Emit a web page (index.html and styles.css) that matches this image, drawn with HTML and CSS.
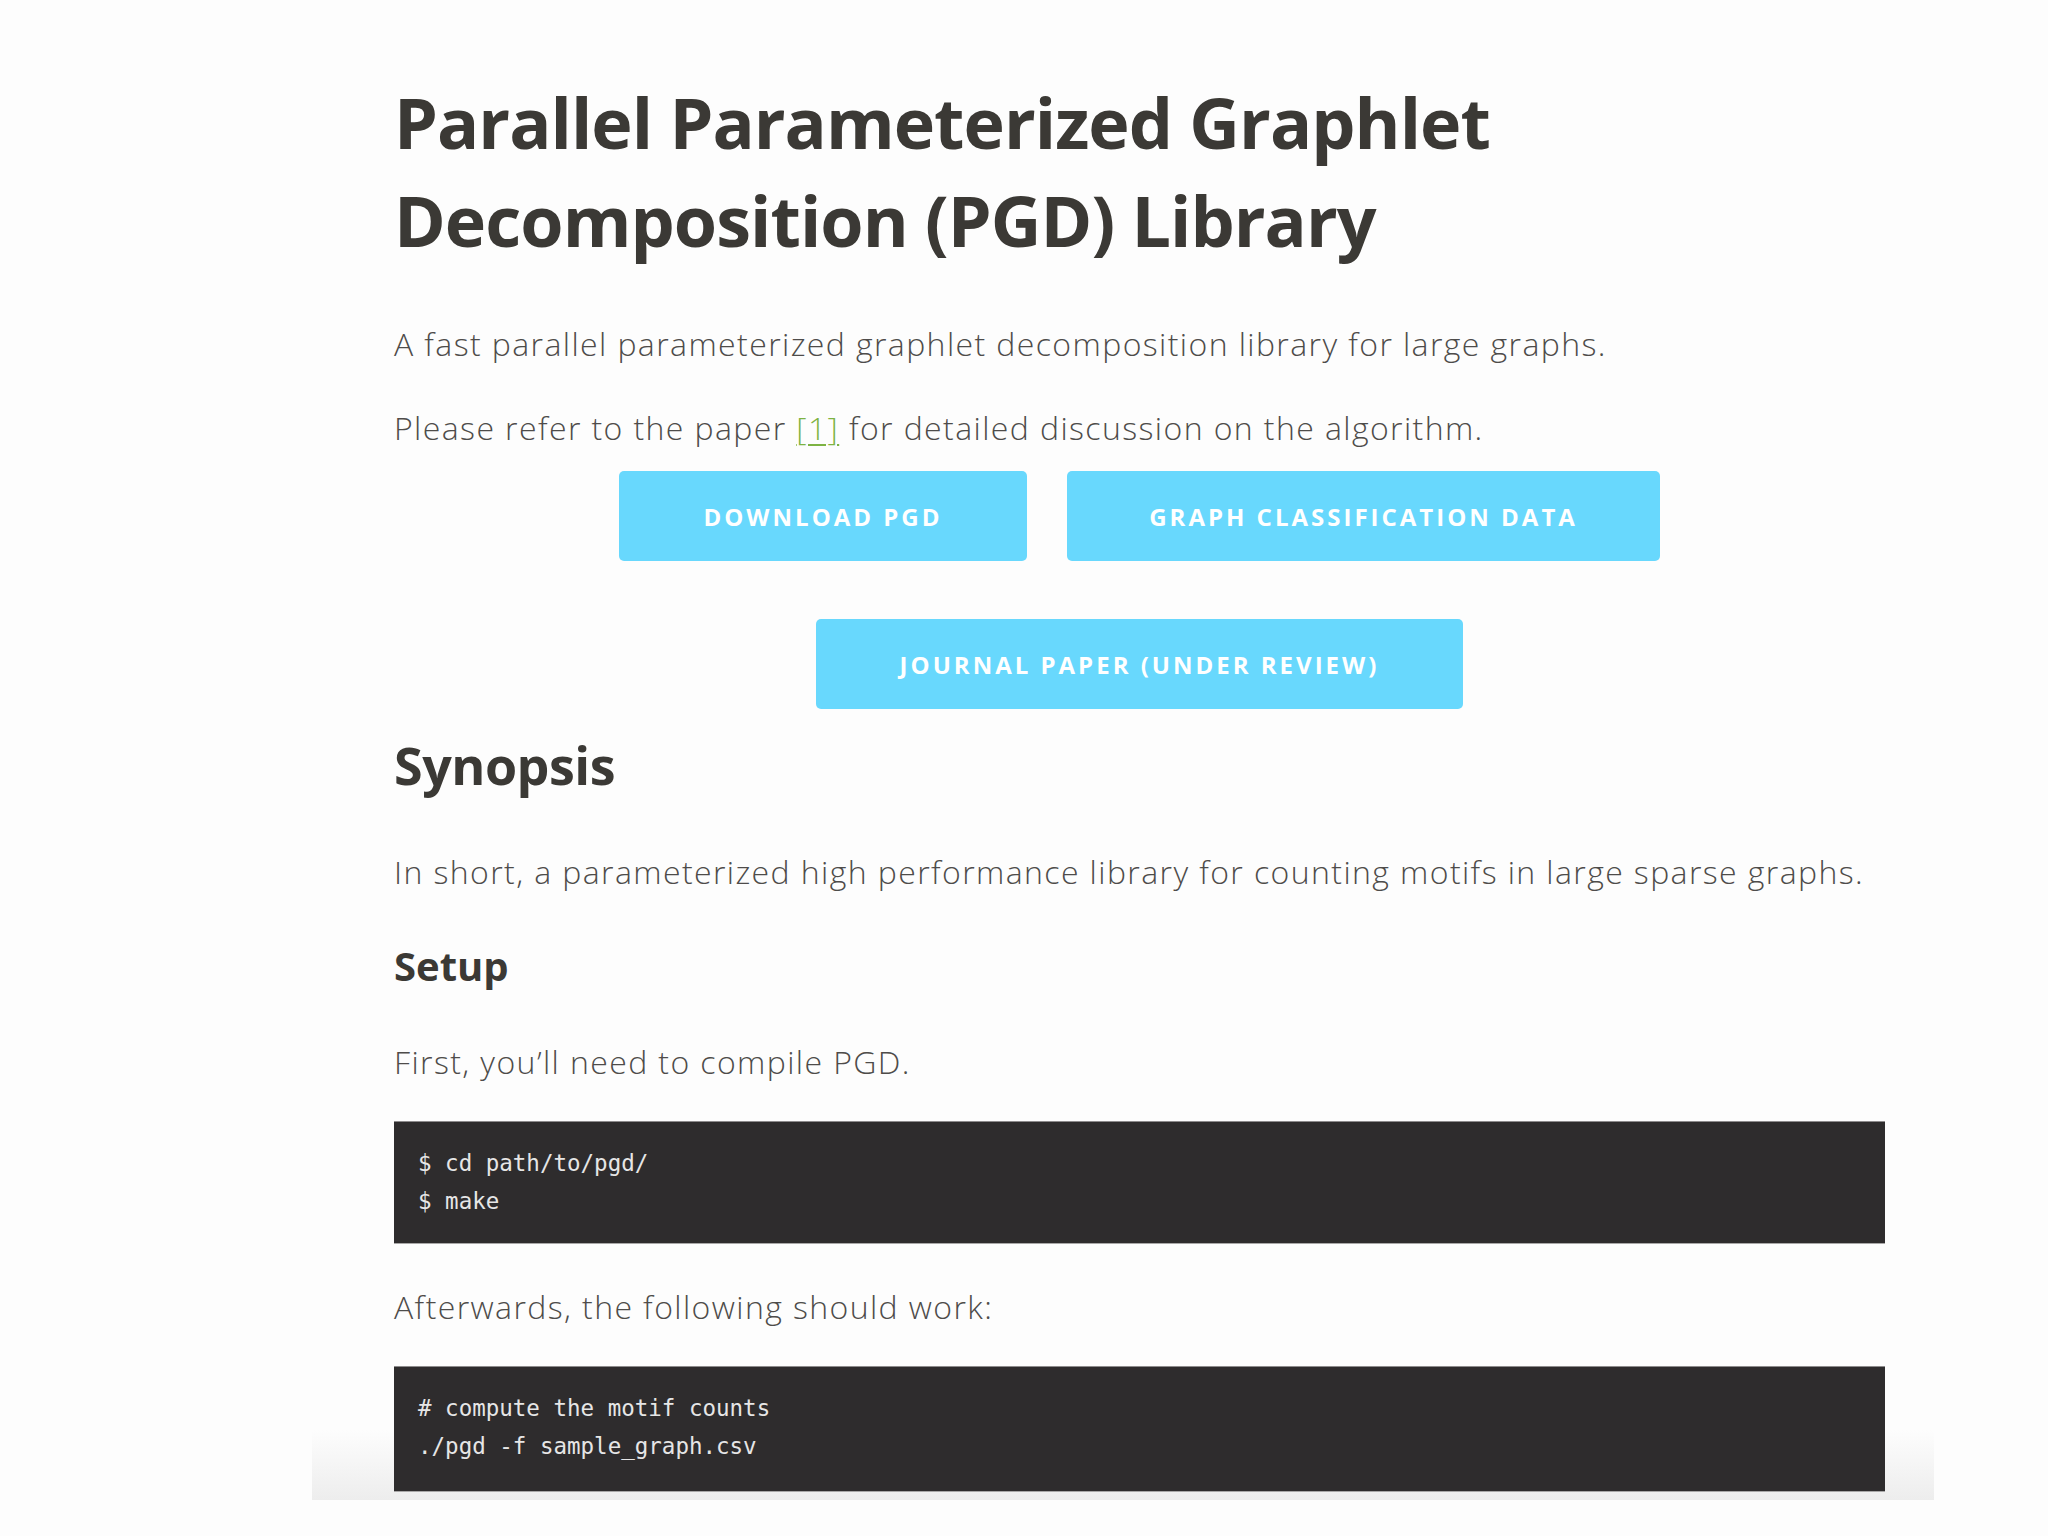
FILE: index.html
```html
<!DOCTYPE html>
<html lang="en">
<head>
<meta charset="utf-8">
<title>Parallel Parameterized Graphlet Decomposition (PGD) Library</title>
<link rel="stylesheet" href="styles.css">
</head>
<body>
<div class="page">
  <main class="content">
    <h1 class="title">Parallel Parameterized Graphlet Decomposition (PGD) Library</h1>
    <p class="lead">A fast parallel parameterized graphlet decomposition library for large graphs.</p>
    <p class="lead lead-2">Please refer to the paper <a class="ref" href="#">[1]</a> for detailed discussion on the algorithm.</p>
    <div class="buttons">
      <div class="btn-row">
        <a class="btn btn-download" href="#">Download PGD</a>
        <a class="btn btn-data" href="#">Graph Classification Data</a>
      </div>
      <div class="btn-row">
        <a class="btn btn-journal" href="#">Journal Paper (Under Review)</a>
      </div>
    </div>
    <h2 class="h-synopsis">Synopsis</h2>
    <p class="text text-synopsis">In short, a parameterized high performance library for counting motifs in large sparse graphs.</p>
    <h3 class="h-setup">Setup</h3>
    <p class="text text-first">First, you’ll need to compile PGD.</p>
    <pre class="code"><code>$ cd path/to/pgd/
$ make</code></pre>
    <p class="text text-after">Afterwards, the following should work:</p>
    <pre class="code code-2"><code># compute the motif counts
./pgd -f sample_graph.csv</code></pre>
  </main>
</div>
</body>
</html>
```
FILE: styles.css
```css
html, body {
  margin: 0;
  padding: 0;
  background: #fdfdfd;
}

body {
  font-family: "Open Sans", "Liberation Sans", sans-serif;
  color: #4a4846;
}

.page {
  margin-left: 312px;
  width: 1622px;
  box-sizing: border-box;
  padding: 73px 49px 8px 82px;
  background: linear-gradient(to bottom, #fdfdfd 0, #fdfdfd calc(100% - 70px), #ededed 100%);
}

.content {
  width: 1491px;
}

.title {
  margin: 0;
  font-size: 70px;
  line-height: 98px;
  font-weight: 700;
  color: #3b3935;
  letter-spacing: -0.95px;
}

.lead {
  margin: 51px 0 0;
  font-size: 32px;
  line-height: 48px;
  font-weight: 300;
  color: #4e4c4a;
  letter-spacing: 1.4px;
}

.lead-2 {
  margin-top: 36px;
}

.ref {
  color: #7db343;
  text-decoration: underline;
  text-decoration-thickness: 2px;
  text-underline-offset: 4px;
}

.buttons {
  margin-top: 19px;
  display: flex;
  flex-direction: column;
  align-items: center;
  gap: 58px;
}

.btn-row {
  display: flex;
  justify-content: center;
  gap: 40px;
}

.btn {
  display: flex;
  align-items: center;
  justify-content: center;
  height: 90px;
  background: #68d8fd;
  border-radius: 5px;
  color: #ffffff;
  text-decoration: none;
  text-transform: uppercase;
  font-weight: 700;
  font-size: 24px;
  letter-spacing: 3px;
}

.btn-download { width: 408px; }
.btn-data { width: 593px; }
.btn-journal { width: 647px; }

.h-synopsis {
  margin: 21px 0 0;
  font-size: 52px;
  line-height: 70px;
  font-weight: 700;
  color: #3b3935;
  letter-spacing: -0.5px;
}

.h-setup {
  margin: 42px 0 0;
  font-size: 40px;
  line-height: 56px;
  font-weight: 700;
  color: #3b3935;
}

.text {
  margin: 0;
  font-size: 32px;
  line-height: 48px;
  font-weight: 300;
  color: #4e4c4a;
  letter-spacing: 1.4px;
}

.text-synopsis { margin-top: 48px; }
.text-first { margin-top: 44px; }
.text-after { margin-top: 39px; }

.code {
  margin: 35px 0 0;
  background: #2e2c2d;
  color: #e6e6e6;
  padding: 22px 24px 22px;
  font-family: "DejaVu Sans Mono", "Liberation Mono", monospace;
  font-size: 22.5px;
  line-height: 38px;
  border-top: 1px solid #8d8b8c;
  border-bottom: 1px solid #a9a8a8;
  box-sizing: border-box;
  height: 123px;
}

.code-2 {
  height: 126px;
}

.code code {
  font-family: inherit;
}
```
